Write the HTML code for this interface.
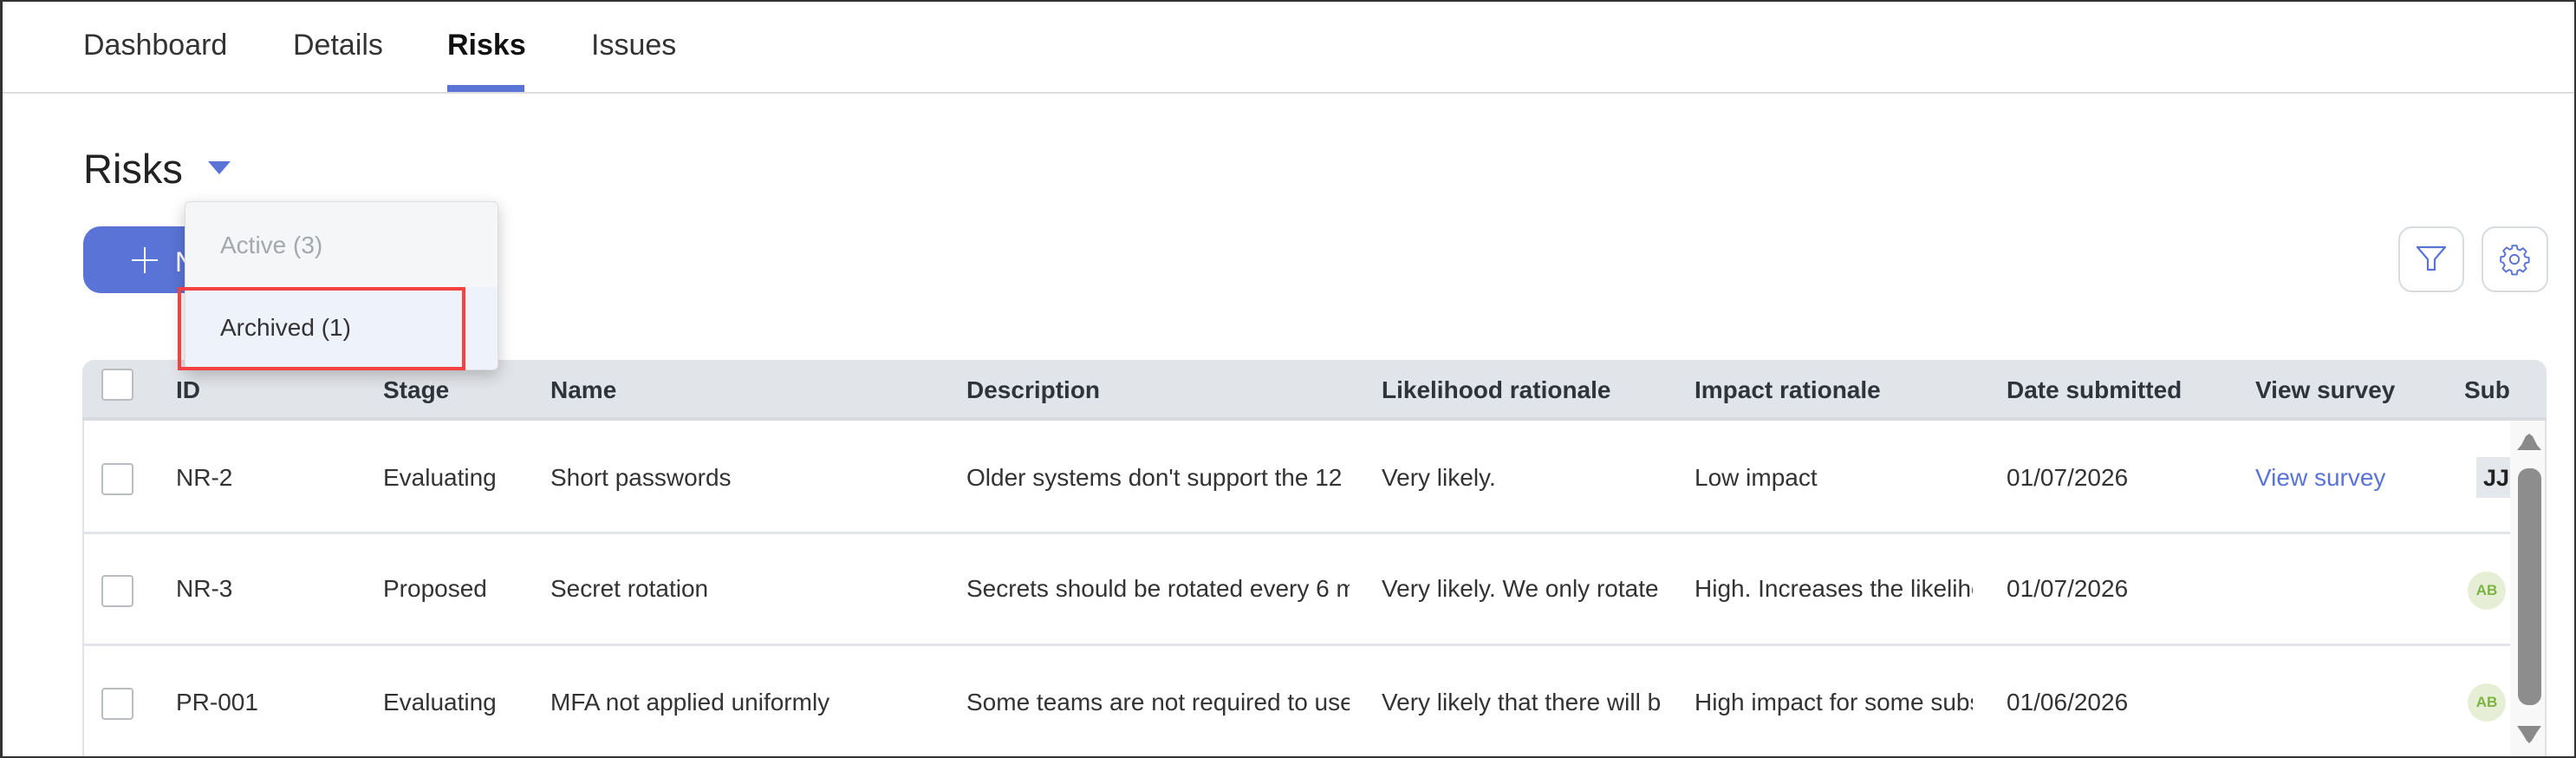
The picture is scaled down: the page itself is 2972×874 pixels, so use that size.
<!DOCTYPE html>
<html><head><meta charset="utf-8"><style>
*{margin:0;padding:0;box-sizing:border-box}
body{width:2972px;height:874px;overflow:hidden;background:#fff;font-family:"Liberation Sans",Arial,sans-serif;color:#333;position:relative}
.a{position:absolute;white-space:nowrap}
.frame{position:absolute;left:0;top:0;width:2972px;height:874px;border:2px solid #333;border-left-width:3px;pointer-events:none;z-index:50}
.tab{font-size:34px;top:33px;color:#333}
.cell{font-size:28px;overflow:hidden;line-height:34px}
.h{font-weight:bold;color:#2f343b}
.cb{position:absolute;left:117px;width:37px;height:37px;border:2px solid #b9bdc2;border-radius:4px;background:#fff}
</style></head><body>
<div class="frame"></div>
<div class="a tab" style="left:96px">Dashboard</div>
<div class="a tab" style="left:338px">Details</div>
<div class="a tab" style="left:516px;font-weight:bold;color:#111">Risks</div>
<div class="a tab" style="left:682px">Issues</div>
<div class="a" style="left:516px;top:98px;width:89px;height:8px;background:#5a73d6"></div>
<div class="a" style="left:0;top:106px;width:2972px;height:2px;background:#ddd"></div>

<div class="a" style="left:96px;top:167px;font-size:47px;color:#222">Risks</div>
<svg class="a" style="left:240px;top:186px" width="26" height="15"><polygon points="0,0 26,0 13,15" fill="#5a73d6"/></svg>

<div class="a" style="left:96px;top:261px;width:200px;height:77px;background:#5a73d6;border-radius:20px"></div>
<div class="a" style="left:166px;top:285px;width:2px;height:30px;background:#fff"></div>
<div class="a" style="left:152px;top:299px;width:30px;height:2px;background:#fff"></div>
<div class="a" style="left:202px;top:284px;font-size:32px;color:#fff">N</div>

<div class="a" style="left:2767px;top:261px;width:76px;height:76px;border:2px solid #d8dce0;border-radius:16px"></div>
<svg class="a" style="left:2787px;top:281px" width="36" height="36" viewBox="0 0 36 36"><path d="M2 4 H34 L22 18 V30 H14 V18 Z" fill="none" stroke="#5a73d6" stroke-width="2.2" stroke-linejoin="round"/></svg>
<div class="a" style="left:2863px;top:261px;width:77px;height:76px;border:2px solid #d8dce0;border-radius:16px"></div>
<svg class="a" style="left:2882px;top:280px" width="38" height="38" viewBox="0 0 24 24"><path d="M10.3 2h3.4l.5 2.6 1.8.8 2.2-1.5 2.4 2.4-1.5 2.2.8 1.8 2.6.5v3.4l-2.6.5-.8 1.8 1.5 2.2-2.4 2.4-2.2-1.5-1.8.8-.5 2.6h-3.4l-.5-2.6-1.8-.8-2.2 1.5-2.4-2.4 1.5-2.2-.8-1.8L2 13.7v-3.4l2.6-.5.8-1.8-1.5-2.2 2.4-2.4 2.2 1.5 1.8-.8z" fill="none" stroke="#5a73d6" stroke-width="1.2" stroke-linejoin="round"/><circle cx="12" cy="12" r="3.3" fill="none" stroke="#5a73d6" stroke-width="1.2"/></svg>

<!-- table -->
<div class="a" style="left:95px;top:415px;width:2843px;height:459px;border:2px solid #e1e4e8;border-bottom:none;border-radius:14px 14px 0 0"></div>
<div class="a" style="left:95px;top:415px;width:2843px;height:70px;background:#e1e4e8;border-radius:14px 14px 0 0"></div>
<div class="a" style="left:95px;top:481px;width:2843px;height:4px;background:#d6d9dd"></div>
<div class="cb" style="top:425px"></div>
<div class="a cell h" style="left:203px;top:433px">ID</div>
<div class="a cell h" style="left:442px;top:433px">Stage</div>
<div class="a cell h" style="left:635px;top:433px">Name</div>
<div class="a cell h" style="left:1115px;top:433px">Description</div>
<div class="a cell h" style="left:1594px;top:433px">Likelihood rationale</div>
<div class="a cell h" style="left:1955px;top:433px">Impact rationale</div>
<div class="a cell h" style="left:2315px;top:433px">Date submitted</div>
<div class="a cell h" style="left:2602px;top:433px">View survey</div>
<div class="a cell h" style="left:2843px;top:433px;width:53px">Sub</div>

<div class="a" style="left:97px;top:613px;width:2799px;height:3px;background:#e1e4e8"></div>
<div class="a" style="left:97px;top:742px;width:2799px;height:3px;background:#e1e4e8"></div>

<div class="cb" style="top:534px"></div>
<div class="cb" style="top:663px"></div>
<div class="cb" style="top:793px"></div>

<div class="a cell" style="left:203px;top:534px">NR-2</div>
<div class="a cell" style="left:442px;top:534px">Evaluating</div>
<div class="a cell" style="left:635px;top:534px">Short passwords</div>
<div class="a cell" style="left:1115px;top:534px;width:442px">Older systems don't support the 12 character passwords</div>
<div class="a cell" style="left:1594px;top:534px;width:322px">Very likely.</div>
<div class="a cell" style="left:1955px;top:534px;width:321px">Low impact</div>
<div class="a cell" style="left:2315px;top:534px">01/07/2026</div>
<div class="a cell" style="left:2602px;top:534px;color:#5a73d6">View survey</div>
<div class="a" style="left:2857px;top:527px;width:39px;height:47px;background:#e4e7eb;font-weight:bold;font-size:27px;padding:9px 0 0 8px;color:#222;overflow:hidden">JJ</div>

<div class="a cell" style="left:203px;top:662px">NR-3</div>
<div class="a cell" style="left:442px;top:662px">Proposed</div>
<div class="a cell" style="left:635px;top:662px">Secret rotation</div>
<div class="a cell" style="left:1115px;top:662px;width:442px">Secrets should be rotated every 6 months</div>
<div class="a cell" style="left:1594px;top:662px;width:322px">Very likely. We only rotate yearly</div>
<div class="a cell" style="left:1955px;top:662px;width:321px">High. Increases the likelihood</div>
<div class="a cell" style="left:2315px;top:662px">01/07/2026</div>
<div class="a" style="left:2847px;top:659px;width:44px;height:44px;border-radius:50%;background:#e6efd6;color:#7cb342;font-weight:bold;font-size:17px;text-align:center;line-height:44px">AB</div>

<div class="a cell" style="left:203px;top:793px">PR-001</div>
<div class="a cell" style="left:442px;top:793px">Evaluating</div>
<div class="a cell" style="left:635px;top:793px">MFA not applied uniformly</div>
<div class="a cell" style="left:1115px;top:793px;width:442px">Some teams are not required to use MFA</div>
<div class="a cell" style="left:1594px;top:793px;width:322px">Very likely that there will be</div>
<div class="a cell" style="left:1955px;top:793px;width:321px">High impact for some subset</div>
<div class="a cell" style="left:2315px;top:793px">01/06/2026</div>
<div class="a" style="left:2847px;top:788px;width:44px;height:44px;border-radius:50%;background:#e6efd6;color:#7cb342;font-weight:bold;font-size:17px;text-align:center;line-height:44px">AB</div>

<!-- scrollbar -->
<div class="a" style="left:2896px;top:485px;width:40px;height:389px;background:#f8f8f8"></div>
<svg class="a" style="left:2904px;top:499px" width="28" height="22"><polygon points="0,20 28,20 23,14 18,4 14,1 10,4 5,14" fill="#8a8a8a"/></svg>
<div class="a" style="left:2905px;top:540px;width:27px;height:273px;background:#8d8d8d;border-radius:12px"></div>
<svg class="a" style="left:2904px;top:837px" width="28" height="22"><polygon points="0,0 28,0 23,7 17,17 14,20 11,17 5,7" fill="#8a8a8a"/></svg>

<!-- dropdown -->
<div class="a" style="left:213px;top:232px;width:362px;height:195px;background:#f5f6f8;border:1px solid #ddd;border-radius:6px;box-shadow:0 6px 18px rgba(0,0,0,.22);z-index:10;overflow:hidden">
<div style="position:absolute;left:0;top:98px;width:362px;height:97px;background:#eef2fa"></div>
<div style="position:absolute;left:40px;top:34px;font-size:28px;color:#a4a8ad">Active (3)</div>
<div style="position:absolute;left:40px;top:129px;font-size:28px;color:#333">Archived (1)</div>
</div>
<div class="a" style="left:205px;top:331px;width:332px;height:96px;border:4px solid #f44242;z-index:11"></div>
</body></html>
